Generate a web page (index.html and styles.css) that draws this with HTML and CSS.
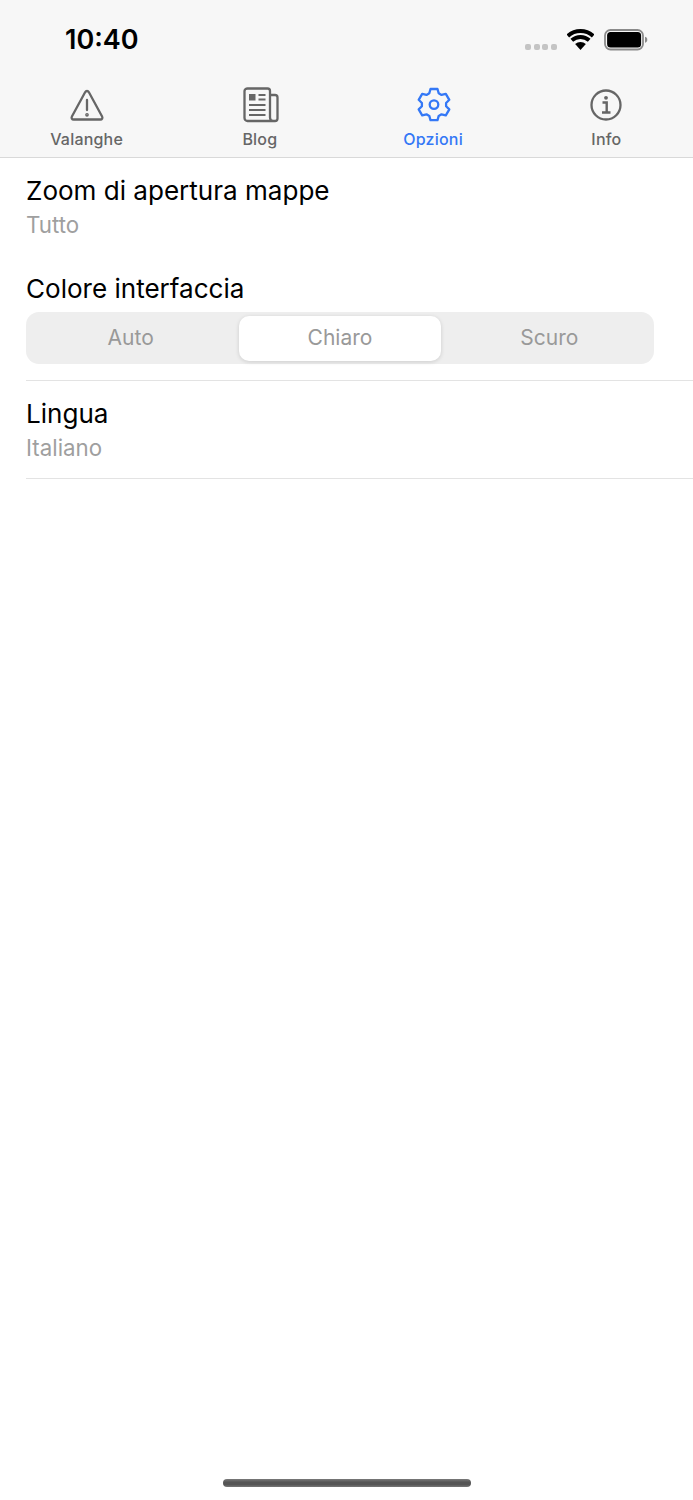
FILE: index.html
```html
<!DOCTYPE html>
<html lang="it">
<head>
<meta charset="utf-8">
<title>Opzioni</title>
<link rel="stylesheet" href="styles.css">
</head>
<body>
<div class="screen">
  <header class="header">
    <div class="status">
      <span class="time">10:40</span>
      <div class="status-icons">
        <div class="signal"><i></i><i></i><i></i><i></i></div>
        <svg class="wifi" width="27" height="22" viewBox="0 0 27 22" fill="none" stroke="#000" stroke-width="4"><path d="M.8 7.900a19 19 0 0 1 25.400 0"/><path d="M4.800 12.300a13 13 0 0 1 17.400 0"/><path d="M13.500 22L8.150 16.060a8 8 0 0 1 10.700 0z" fill="#000" stroke="none"/></svg>
        <svg class="battery" width="46" height="24" viewBox="0 0 46 24"><rect x="1" y="2" width="38" height="19.500" rx="5.500" fill="none" stroke="#8a8a8a" stroke-width="1.800"/><rect x="3.100" y="4" width="34" height="15.500" rx="3.500" fill="#000"/><path d="M41 8.800c1.700.4 2.300 1.600 2.300 2.950s-.6 2.550-2.300 2.950z" fill="#8a8a8a"/></svg>
      </div>
    </div>
    <nav class="tabs">
      <a class="tab">
        <svg class="icon icon-warn" width="36" height="36" viewBox="0 0 36 36" fill="none" stroke="#666" stroke-width="2.300" stroke-linejoin="round" stroke-linecap="round"><path d="M18 4c.9 0 1.500.5 1.900 1.200l13.200 24.300c.8 1.500-.1 3-1.700 3H4.600c-1.600 0-2.500-1.500-1.700-3L16.100 5.200C16.500 4.500 17.100 4 18 4z"/><path d="M18 13v10"/><circle cx="18" cy="27.800" r=".7"/></svg>
        <span class="label">Valanghe</span>
      </a>
      <a class="tab">
        <svg class="icon icon-blog" width="36" height="36" viewBox="0 0 36 36" fill="none" stroke="#666" stroke-width="2.300" stroke-linejoin="round"><path d="M27 8h5c1.500 0 2.500 1 2.500 2.500v21c0 1.500-1 2.500-2.500 2.500H4.500C3 34 1.500 33 1.500 31V4C1.500 2.500 3 1.500 4.500 1.500h20C26 1.500 27 2.500 27 4v26.500c0 2 1.500 3.500 3 3.500"/><rect x="6" y="7" width="6.500" height="6.500" fill="#666" stroke="none"/><path d="M15.500 8h7M15.500 12.500h7M6 18h16.500M6 23h16.500M6 28h16.500" stroke-width="2"/></svg>
        <span class="label">Blog</span>
      </a>
      <a class="tab active">
        <svg class="icon icon-gear" width="36" height="36" viewBox="0 0 36 36" fill="none" stroke="#3478f6" stroke-width="2.300" stroke-linejoin="round"><path d="M14.500 2h7l1.200 4.300 2.800 1.600 4.300-1.100 3.500 6-3.200 3.200v3.200l3.200 3.200-3.500 6-4.300-1.100-2.800 1.600L21.500 33.200h-7l-1.200-4.300-2.800-1.600-4.300 1.100-3.500-6 3.200-3.200v-3.200l-3.200-3.200 3.500-6 4.300 1.100 2.800-1.600z"/><circle cx="18" cy="17.600" r="4.300"/></svg>
        <span class="label">Opzioni</span>
      </a>
      <a class="tab">
        <svg class="icon" width="36" height="36" viewBox="0 0 36 36" fill="none" stroke="#666" stroke-width="2.300"><circle cx="18" cy="18" r="14.500"/><circle cx="18" cy="10.800" r="1.900" fill="#666" stroke="none"/><path d="M14.500 15.500h4.200v9.500M14 25.500h8.500" stroke-width="2.400"/></svg>
        <span class="label">Info</span>
      </a>
    </nav>
  </header>

  <main class="content">
    <section class="option">
      <div class="option-title">Zoom di apertura mappe</div>
      <div class="option-value">Tutto</div>
    </section>
    <section class="option option-theme">
      <div class="option-title">Colore interfaccia</div>
      <div class="segmented">
        <div class="segment">Auto</div>
        <div class="segment selected">Chiaro</div>
        <div class="segment">Scuro</div>
      </div>
    </section>
    <section class="option option-lang">
      <div class="option-title">Lingua</div>
      <div class="option-value">Italiano</div>
    </section>
  </main>

  <div class="home-bar"></div>
</div>
</body>
</html>
```

FILE: styles.css
```css
* { box-sizing: border-box; }
html, body { margin: 0; padding: 0; background: #fff; }
body { font-family: Inter, "Liberation Sans", sans-serif; color: #000; }
.screen { width: 693px; height: 1500px; display: flex; flex-direction: column; overflow: hidden; }

.header { height: 158px; background: #f7f7f7; border-bottom: 1px solid #d9d9d9; flex: none; }
.status { height: 78px; padding: 22px 43px 0 65px; display: flex; justify-content: space-between; align-items: flex-start; }
.time { font-size: 27px; font-weight: 600; line-height: 36px; }
.status-icons { display: flex; align-items: flex-start; padding-top: 6px; }
.signal { display: flex; gap: 2.700px; margin-top: 16px; margin-right: 10px; }
.signal i { width: 6px; height: 5.500px; border-radius: 2px; background: #c4c4c4; display: block; }
.wifi { margin-right: 10px; display: block; }
.battery { display: block; }

.tabs { display: grid; grid-template-columns: repeat(4, 1fr); padding-top: 9px; }
.tab { display: flex; flex-direction: column; align-items: center; color: #666; }
.tab.active { color: #3478f6; }
.icon { display: block; }
.icon-warn { margin-left: 1px; }
.icon-blog { margin-left: 2px; }
.icon-gear { margin-left: 1px; }
.label { font-size: 16px; line-height: 20px; margin-top: 6px; letter-spacing: .2px; font-weight: 500; }

.content { padding-left: 26px; flex: none; }
.option { padding-top: 15px; height: 98px; }
.option-title { font-size: 26.050px; line-height: 35px; }
.option-value { font-size: 22.300px; line-height: 28px; margin-top: 3px; color: #9f9f9f; }
.option-theme { height: 125px; border-bottom: 1px solid #e3e3e3; }
.option-theme .option-title { margin-bottom: 6px; }
.option-lang { height: 98px; border-bottom: 1px solid #e3e3e3; }

.segmented { width: 628px; height: 52px; background: #eee; border-radius: 13px; display: grid; grid-template-columns: repeat(3, 1fr); padding: 4px 0 3px; }
.segment { font-size: 21px; padding-bottom: 3px; display: flex; align-items: center; justify-content: center; color: #999; border-radius: 10px; }
.segment.selected { background: #fff; margin: 0 4px; box-shadow: 0 1px 4px rgba(0, 0, 0, .14); }

.home-bar { width: 248px; height: 8px; margin: 1000px 0 0 223px; border-radius: 4px; background: linear-gradient(#7a7a7a, #555 40%, #555 70%, #777); flex: none; }
```
